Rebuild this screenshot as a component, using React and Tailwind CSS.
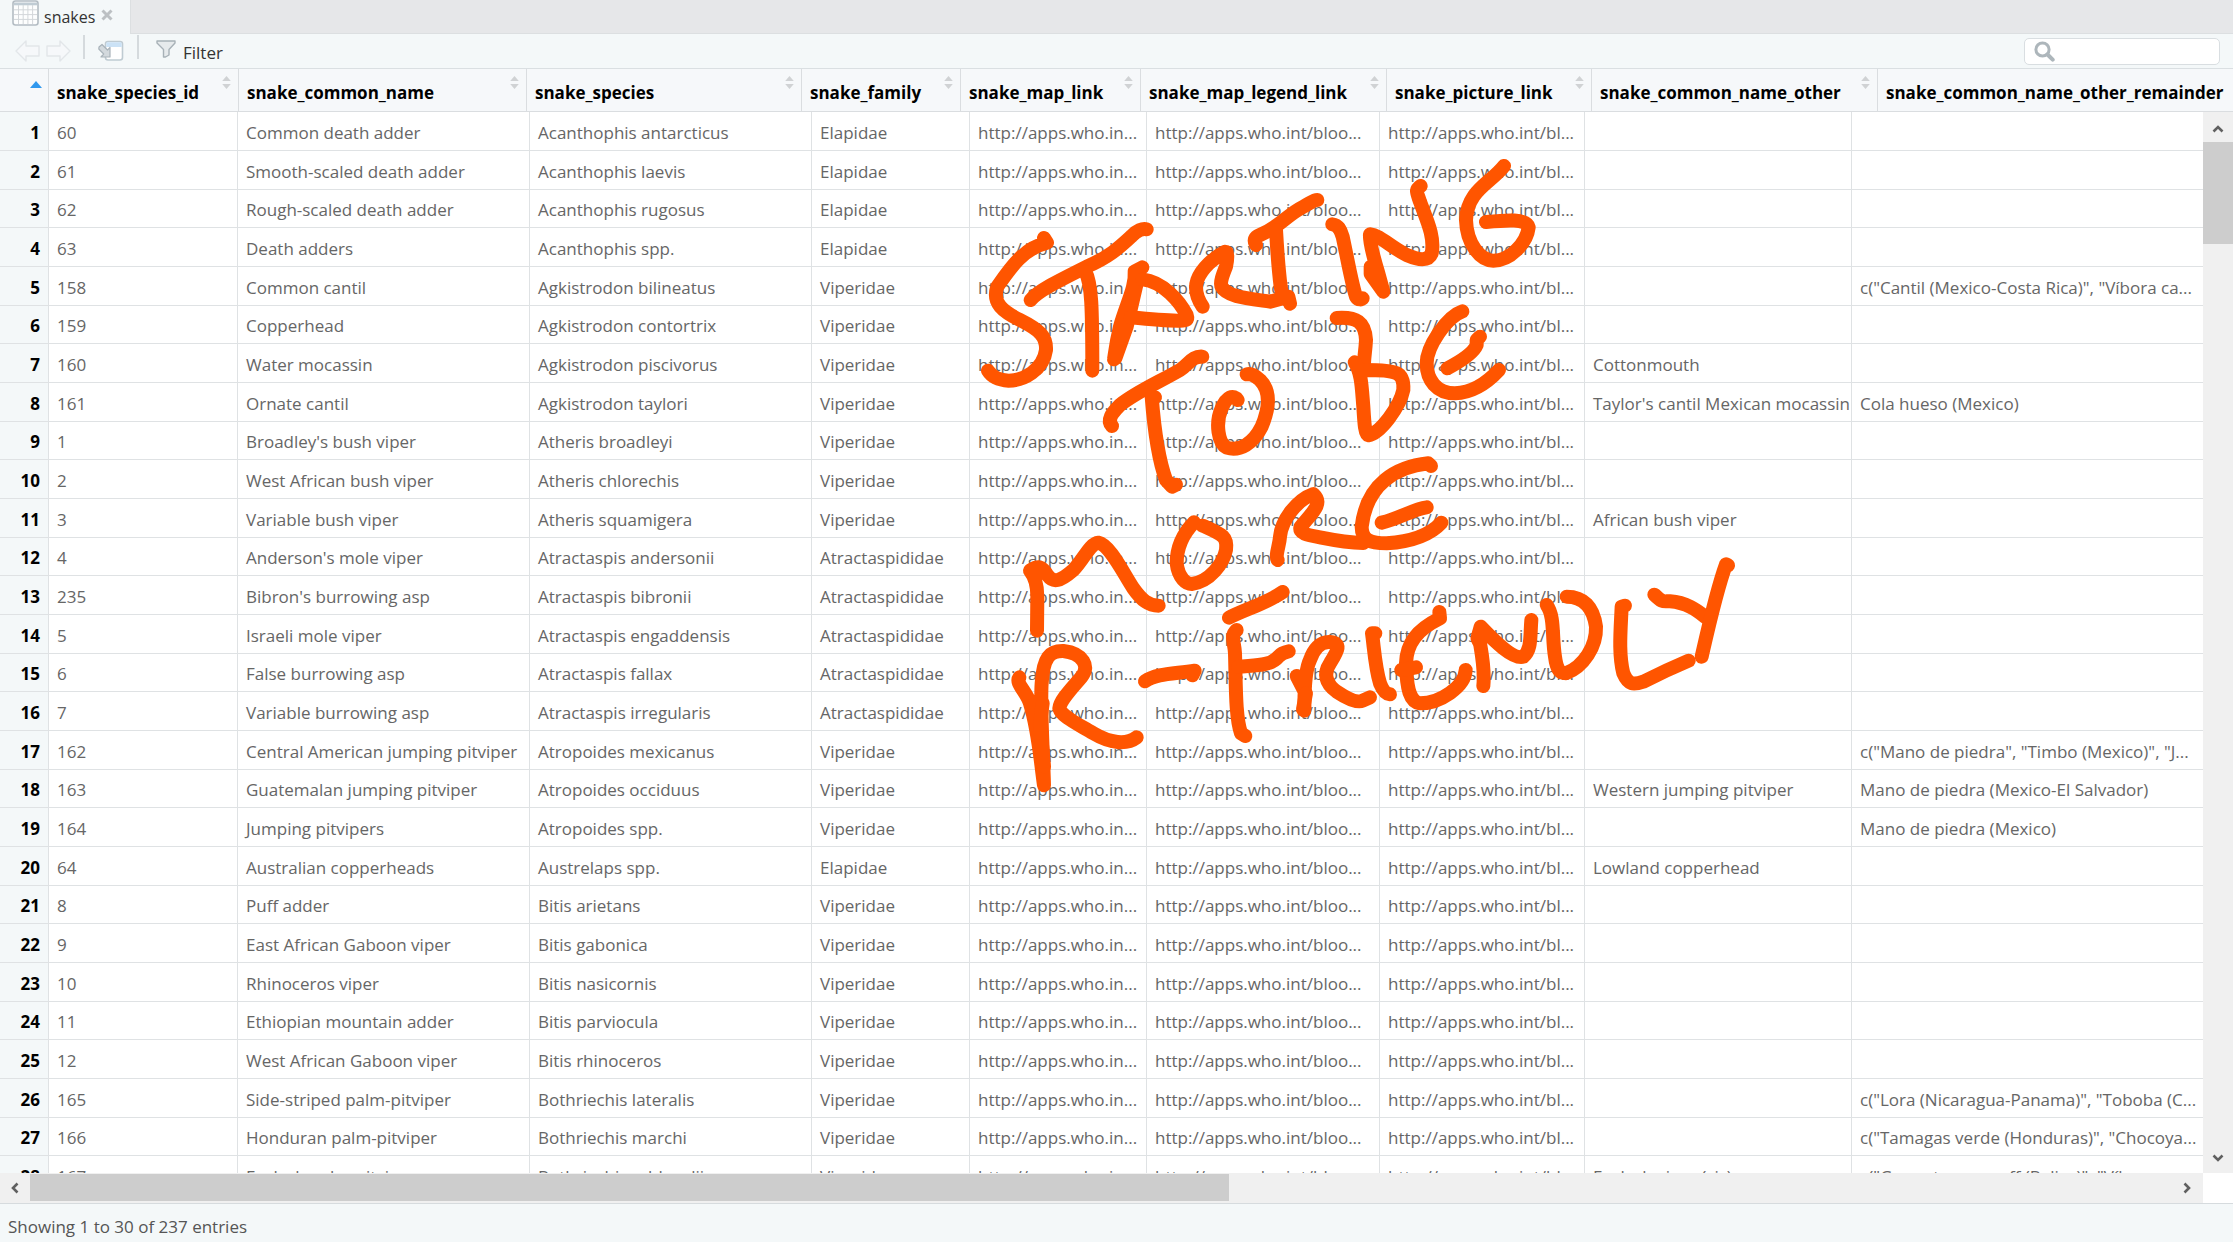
const HEADERS = [
  'snake_species_id',
  'snake_common_name',
  'snake_species',
  'snake_family',
  'snake_map_link',
  'snake_map_legend_link',
  'snake_picture_link',
  'snake_common_name_other',
  'snake_common_name_other_remainder',
];

const LINKS = ['http://apps.who.in...', 'http://apps.who.int/bloo...', 'http://apps.who.int/bl...'];

// id, common name, species, family, other common name, remaining names
const SNAKES = [
  ['60', 'Common death adder', 'Acanthophis antarcticus', 'Elapidae'],
  ['61', 'Smooth-scaled death adder', 'Acanthophis laevis', 'Elapidae'],
  ['62', 'Rough-scaled death adder', 'Acanthophis rugosus', 'Elapidae'],
  ['63', 'Death adders', 'Acanthophis spp.', 'Elapidae'],
  ['158', 'Common cantil', 'Agkistrodon bilineatus', 'Viperidae', '', 'c("Cantil (Mexico-Costa Rica)", "Víbora ca...'],
  ['159', 'Copperhead', 'Agkistrodon contortrix', 'Viperidae'],
  ['160', 'Water mocassin', 'Agkistrodon piscivorus', 'Viperidae', 'Cottonmouth'],
  ['161', 'Ornate cantil', 'Agkistrodon taylori', 'Viperidae', "Taylor's cantil Mexican mocassin", 'Cola hueso (Mexico)'],
  ['1', "Broadley's bush viper", 'Atheris broadleyi', 'Viperidae'],
  ['2', 'West African bush viper', 'Atheris chlorechis', 'Viperidae'],
  ['3', 'Variable bush viper', 'Atheris squamigera', 'Viperidae', 'African bush viper'],
  ['4', "Anderson's mole viper", 'Atractaspis andersonii', 'Atractaspididae'],
  ['235', "Bibron's burrowing asp", 'Atractaspis bibronii', 'Atractaspididae'],
  ['5', 'Israeli mole viper', 'Atractaspis engaddensis', 'Atractaspididae'],
  ['6', 'False burrowing asp', 'Atractaspis fallax', 'Atractaspididae'],
  ['7', 'Variable burrowing asp', 'Atractaspis irregularis', 'Atractaspididae'],
  ['162', 'Central American jumping pitviper', 'Atropoides mexicanus', 'Viperidae', '', 'c("Mano de piedra", "Timbo (Mexico)", "J...'],
  ['163', 'Guatemalan jumping pitviper', 'Atropoides occiduus', 'Viperidae', 'Western jumping pitviper', 'Mano de piedra (Mexico-El Salvador)'],
  ['164', 'Jumping pitvipers', 'Atropoides spp.', 'Viperidae', '', 'Mano de piedra (Mexico)'],
  ['64', 'Australian copperheads', 'Austrelaps spp.', 'Elapidae', 'Lowland copperhead'],
  ['8', 'Puff adder', 'Bitis arietans', 'Viperidae'],
  ['9', 'East African Gaboon viper', 'Bitis gabonica', 'Viperidae'],
  ['10', 'Rhinoceros viper', 'Bitis nasicornis', 'Viperidae'],
  ['11', 'Ethiopian mountain adder', 'Bitis parviocula', 'Viperidae'],
  ['12', 'West African Gaboon viper', 'Bitis rhinoceros', 'Viperidae'],
  ['165', 'Side-striped palm-pitviper', 'Bothriechis lateralis', 'Viperidae', '', 'c("Lora (Nicaragua-Panama)", "Toboba (C...'],
  ['166', 'Honduran palm-pitviper', 'Bothriechis marchi', 'Viperidae', '', 'c("Tamagas verde (Honduras)", "Chocoya...'],
  ['167', 'Eyelash palm-pitviper', 'Bothriechis schlegelii', 'Viperidae', 'Eyelash viper (sic)', 'c("Green tommygoff (Belize)", "Víbor...'],
];

function SheetIcon() {
  return (
    <svg className="h-[26px] w-[27px]" viewBox="0 0 27 26" aria-hidden="true">
      <rect x="1" y="1" width="25" height="24" rx="2.5" fill="#fdfefe" stroke="#b3bcc3" strokeWidth="1.6" />
      <path d="M2 2.5h23v2.8H2z" fill="#c0ccd4" />
      <path d="M6.5 5v19M11.2 5v19M15.9 5v19M20.6 5v19M2 9.8h23M2 14.6h23M2 19.4h23" stroke="#d3d7da" strokeWidth="1" />
    </svg>
  );
}

function ArrowIcon({ flip }) {
  return (
    <svg className="h-[22px] w-[25px]" viewBox="0 0 25 22" aria-hidden="true">
      <path
        d={flip ? 'M24 11L14 1v5H1v10h13v5z' : 'M1 11L11 1v5h13v10H11v5z'}
        fill="#f6f8fa"
        stroke="#e2e6e9"
        strokeWidth="1.4"
        strokeLinejoin="round"
      />
    </svg>
  );
}

function PopOutIcon() {
  return (
    <svg className="h-[22px] w-[26px]" viewBox="0 0 26 22" aria-hidden="true">
      <rect x="7.5" y="1.5" width="17" height="18.5" rx="2.5" fill="#fff" stroke="#bfcbd2" strokeWidth="1.6" />
      <path d="M8.3 3.5q0-1.2 1.2-1.2h13q1.2 0 1.2 1.2V7H8.3z" fill="#cbe2f6" />
      <path d="M1 7L4 4.5l5.5 5.5L12 7.5V17H3l2.7-3L.8 9z" fill="#d3d9dd" stroke="#a9b3ba" strokeWidth="1.2" strokeLinejoin="round" />
    </svg>
  );
}

function FunnelIcon() {
  return (
    <svg className="h-[18px] w-5" viewBox="0 0 20 18" aria-hidden="true">
      <path
        d="M1 1h18v2l-6 6.5V15l-3.5 2H7.5V9.5L1 3z"
        fill="#e6eaec"
        stroke="#a7b1b7"
        strokeWidth="1.4"
        strokeLinejoin="round"
      />
    </svg>
  );
}

function SearchIcon() {
  return (
    <svg className="absolute top-[3px] left-[10px] h-[21px] w-[21px]" viewBox="0 0 21 21" aria-hidden="true">
      <circle cx="8.5" cy="8.5" r="6.6" fill="none" stroke="#adb6bb" strokeWidth="3" />
      <path d="M13.5 13.5l5.2 5.2" stroke="#adb6bb" strokeWidth="4" strokeLinecap="round" />
    </svg>
  );
}

function SortIcon() {
  return (
    <svg className="mt-[7px] h-[13px] w-[9px] shrink-0" viewBox="0 0 9 13" aria-hidden="true">
      <path d="M4.5 0L8.8 5H.2zM4.5 13L8.8 8H.2z" fill="#d0d2d4" />
    </svg>
  );
}

function Chevron({ d }) {
  return (
    <svg className="h-3 w-3" viewBox="0 0 12 12" fill="none" stroke="#606060" strokeWidth="2.6" aria-hidden="true">
      <path d={d} />
    </svg>
  );
}

// Hand-drawn note: each entry is one pen stroke, three units to the pixel.
const UPPER_LEFT = [
  'M252 294L261 308C190 325 150 385 112 440C95 490 130 515 180 540C240 570 260 590 258 630C250 690 190 722 146 722C110 720 92 705 84 692',
  'M212 480C230 455 290 425 380 380C450 350 480 320 515 288C530 272 548 264 560 268',
  'M376 395C395 430 397 500 397 692',
  'M547 382L524 394C528 440 500 490 480 560C468 610 465 640 462 658L480 560L500 560L530 430L500 560L466 655',
  'M548 418C610 425 660 485 680 525C685 540 680 542 660 542C620 543 560 537 512 532',
  'M728 500C705 465 705 440 712 420C725 385 765 350 795 335C805 335 802 360 798 380C790 400 778 430 785 440C800 470 860 475 930 485L985 470L990 491',
  'M888 315C880 300 884 292 900 285C960 260 980 225 1030 200C1050 190 1060 180 1072 180',
  'M948 270C952 340 957 400 962 440C966 465 970 475 985 480',
  'M456 858C440 840 455 820 480 795C530 755 600 725 660 690C690 670 695 648 727 650',
  'M585 772L575 770C582 860 592 950 618 1020L636 1040L648 1034',
  'M833 780C820 762 800 770 785 805C765 850 775 910 800 923C840 935 880 910 905 860C930 800 930 750 900 720C885 706 870 700 860 703',
];
const UPPER_RIGHT = [
  'M97 253C115 255 122 270 128 290C145 370 155 430 168 470C175 482 185 478 188 475',
  'M362 138C345 150 350 155 360 185C380 240 405 290 395 340C385 365 355 360 320 345C270 320 240 285 210 283C208 300 220 350 235 400L250 455L212 402V380L240 430',
  'M612 78C572 130 502 150 498 240C500 310 540 362 580 362C630 362 680 310 686 262C680 235 620 240 558 246',
  'M110 534C170 530 195 545 198 600C196 640 190 660 192 690',
  'M164 667C185 700 185 740 190 800C193 850 195 885 205 886C240 880 300 800 310 750C313 695 290 690 195 690',
  'M487 514C440 530 380 620 380 670C380 720 410 760 465 760C520 758 560 730 597 690',
  'M442 685C480 665 520 640 530 615L530 600L540 590',
];
const LOWER_LEFT = [
  'M231 572L232 470C232 430 225 410 210 392C240 372 250 385 262 405C280 430 300 425 340 390C370 360 390 310 415 308C450 315 490 400 520 445C545 480 565 497 596 497',
  'M702 247C670 280 650 320 650 370C655 415 680 432 695 432C750 425 790 370 798 330C803 290 790 285 728 257',
  'M953 360C945 345 958 320 960 290C965 240 1010 180 1060 162C1090 190 1060 215 1022 260C1015 280 1040 285 1080 292C1120 300 1160 308 1210 309',
  'M178 712C165 730 200 755 210 790C235 870 240 950 252 1036C250 950 240 800 245 730C250 650 270 632 310 633C370 640 390 680 365 710C340 740 300 780 298 805C305 830 350 850 400 880C450 910 500 915 530 892',
  'M248 790L240 850L252 980',
  'M555 724C590 700 640 702 704 692L697 706',
  'M807 533C850 510 920 490 968 456',
  'M830 570C810 590 823 600 825 640C828 740 826 830 843 880L856 888',
  'M835 680C880 675 930 680 955 650C965 638 975 636 986 634',
  'M1010 708L1034 755L1033 812C1034 790 1030 700 1050 660C1060 630 1080 604 1110 606C1145 610 1135 630 1110 670C1090 700 1095 730 1130 755C1160 775 1190 790 1208 782L1230 772',
  'M1029 808L1038 760',
];
const LOWER_RIGHT = [
  'M393 78L385 70C290 80 200 130 185 260C185 300 210 310 260 310C330 305 390 285 424 248',
  'M245 248C300 235 340 207 380 202',
  'M226 580L216 580C222 620 225 680 240 730C250 755 260 762 270 763',
  'M418 516L420 535C350 570 320 610 318 670C320 750 330 785 360 790C420 790 495 740 497 690',
  'M304 690L348 682',
  'M550 738C555 690 545 640 540 610C528 590 532 600 542 560C580 600 640 660 670 650C695 630 690 590 694 540',
  'M740 495C765 530 755 590 765 650C770 690 780 700 798 700C850 680 890 620 888 560C880 500 850 470 800 470',
  'M975 497L965 500C962 570 955 640 970 700C985 735 1000 735 1030 725C1080 700 1100 690 1166 662',
  'M1063 464C1090 490 1090 483 1110 484C1160 488 1190 510 1215 530',
  'M1284 376L1278 373C1250 450 1230 540 1205 650',
];

function Strokes({ transform, paths }) {
  return (
    <g transform={transform}>
      {paths.map((d) => (
        <path key={d} d={d} />
      ))}
    </g>
  );
}

function Handwriting() {
  return (
    <svg
      className="pointer-events-none absolute top-[150px] left-[970px] h-[660px] w-[780px]"
      viewBox="970 150 780 660"
      fill="none"
      stroke="#ff5500"
      strokeWidth="42"
      strokeLinecap="round"
      strokeLinejoin="round"
      role="img"
      aria-label="Starting to be more R-friendly"
    >
      <Strokes transform="translate(960 140) scale(.33333)" paths={UPPER_LEFT} />
      <Strokes transform="translate(1300 140) scale(.33333)" paths={UPPER_RIGHT} />
      <Strokes transform="translate(960 440) scale(.33333)" paths={LOWER_LEFT} />
      <Strokes transform="translate(1300 440) scale(.33333)" paths={LOWER_RIGHT} />
    </svg>
  );
}

function HeaderTable() {
  return (
    <table className="w-full shrink-0 table-fixed border-separate border-spacing-0 bg-[#f6f8fa]">
      <colgroup>
        <col className="w-[49px]" />
        <col className="w-[190px]" />
        <col className="w-[288px]" />
        <col className="w-[275px]" />
        <col className="w-[159px]" />
        <col className="w-[180px]" />
        <col className="w-[246px]" />
        <col className="w-[205px]" />
        <col className="w-[286px]" />
        <col />
      </colgroup>
      <thead>
        <tr className="h-[43px]">
          <th className="border-r border-b border-[#dadde0] p-0" aria-label="Row number, sorted ascending">
            <svg className="mb-[12px] ml-[30px] h-[7px] w-3" viewBox="0 0 12 7" aria-hidden="true">
              <path d="M6 0l6 7H0z" fill="#3098ee" />
            </svg>
          </th>
          {HEADERS.map((name, i) => (
            <th key={name} className="border-b border-l-0 border-[#dadde0] p-0 not-last:border-r">
              <div className="flex h-[42px] items-start justify-between pr-[7px] pl-2">
                <span className="pt-3 leading-6 whitespace-nowrap text-black">{name}</span>
                {i < HEADERS.length - 1 && <SortIcon />}
              </div>
            </th>
          ))}
        </tr>
      </thead>
    </table>
  );
}

function BodyTable() {
  return (
    <table className="w-full table-fixed border-separate border-spacing-0 bg-white">
      <colgroup>
        <col className="w-[49px]" />
        <col className="w-[189px]" />
        <col className="w-[292px]" />
        <col className="w-[282px]" />
        <col className="w-[158px]" />
        <col className="w-[177px]" />
        <col className="w-[233px]" />
        <col className="w-[205px]" />
        <col className="w-[267px]" />
        <col />
      </colgroup>
      <tbody className="[&>tr]:h-[39px] [&>tr:nth-child(3n)]:h-[38px]">
        {SNAKES.map(([id, name, species, family, other = '', rest = ''], row) => (
          <tr key={id}>
            <th className="border-r border-b border-[#dfe2e4] bg-[#f4f8f9] p-0 pt-[3px] pr-2 text-right leading-6 text-black">
              {row + 1}
            </th>
            {[id, name, species, family, ...LINKS, other, rest].map((text, i) => (
              <td
                key={i}
                className="overflow-hidden border-b border-[#dfe2e4] p-0 pt-[3px] pl-2 leading-6 whitespace-nowrap not-last:border-r"
              >
                {text}
              </td>
            ))}
          </tr>
        ))}
      </tbody>
    </table>
  );
}

export default function App() {
  return (
    <div className="relative flex h-screen flex-col overflow-hidden bg-[#f4f8f9] font-['Open_Sans',sans-serif] text-[17px] text-[#666]">
      <div className="flex h-[34px] shrink-0 bg-[#e6e7e9]">
        <div className="flex w-[130px] items-center bg-[#f4f8f9] pl-3">
          <div className="self-start">
            <SheetIcon />
          </div>
          <span className="ml-[5px] text-base text-[#333]">snakes</span>
          <button type="button" aria-label="Close tab" className="ml-[6px] pb-1">
            <svg className="h-3 w-3" viewBox="0 0 12 12" stroke="#bcc0c3" strokeWidth="3" aria-hidden="true">
              <path d="M1.5 1.5l9 9M10.5 1.5l-9 9" />
            </svg>
          </button>
        </div>
        <div className="flex-1 border-b border-l border-[#dcdfe1]" />
      </div>

      <div className="flex h-[35px] shrink-0 items-center border-b border-[#dadfe2] pr-[13px] pl-[15px]">
        <button type="button" aria-label="Back" disabled>
          <ArrowIcon />
        </button>
        <button type="button" aria-label="Forward" disabled className="ml-[6px]">
          <ArrowIcon flip />
        </button>
        <div className="mb-2 ml-3 h-6 w-[2px] bg-[#d5dadd]" />
        <button type="button" aria-label="Show in new window" className="ml-[13px]">
          <PopOutIcon />
        </button>
        <div className="mb-2 ml-[13px] h-6 w-[2px] bg-[#d5dadd]" />
        <button type="button" className="ml-[17px] flex items-center text-[#333]">
          <span className="mb-1">
            <FunnelIcon />
          </span>
          <span className="ml-[7px] pt-1 leading-6">Filter</span>
        </button>
        <div className="relative ml-auto">
          <SearchIcon />
          <input
            type="search"
            aria-label="Search"
            className="h-[27px] w-[196px] rounded-[5px] border border-[#d9dee1] bg-white pr-2 pl-9 outline-none"
          />
        </div>
      </div>

      <HeaderTable />

      <div className="flex min-h-0 flex-1">
        <div className="min-w-0 flex-1 overflow-hidden">
          <BodyTable />
        </div>
        <div className="flex w-[30px] shrink-0 flex-col bg-[#f0f0f0]">
          <button type="button" aria-label="Scroll up" className="grid h-[30px] place-items-center pt-1">
            <Chevron d="M1.5 8.5L6 4l4.5 4.5" />
          </button>
          <div className="h-[102px] bg-[#cdcdcd]" />
          <button type="button" aria-label="Scroll down" className="mt-auto grid h-[30px] place-items-center">
            <Chevron d="M1.5 3.5L6 8l4.5-4.5" />
          </button>
        </div>
      </div>

      <div className="flex h-[31px] shrink-0 border-b border-[#d6dbde] bg-white">
        <div className="flex flex-1 bg-[#f0f0f0]">
          <button type="button" aria-label="Scroll left" className="grid w-[30px] place-items-center">
            <Chevron d="M8.5 1.5L4 6l4.5 4.5" />
          </button>
          <div className="mt-px mb-[2px] w-[1199px] bg-[#cdcdcd]" />
          <button type="button" aria-label="Scroll right" className="ml-auto grid w-8 place-items-center">
            <Chevron d="M3.5 1.5L8 6l-4.5 4.5" />
          </button>
        </div>
        <div className="w-[30px]" />
      </div>

      <div className="flex h-[38px] shrink-0 items-center pt-2 pl-2 text-[#555]">Showing 1 to 30 of 237 entries</div>

      <Handwriting />
    </div>
  );
}
